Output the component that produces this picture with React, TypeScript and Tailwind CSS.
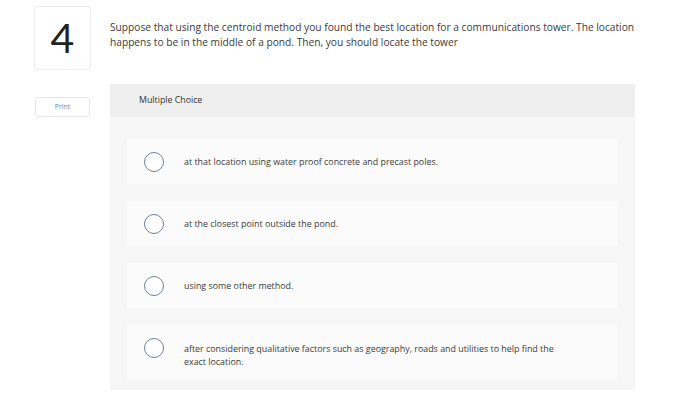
import React from 'react';

const options: React.ReactNode[] = [
  'at that location using water proof concrete and precast poles.',
  'at the closest point outside the pond.',
  'using some other method.',
  <>
    after considering qualitative factors such as geography, roads and utilities to help find the
    <br />
    exact location.
  </>,
];

const Radio = () => (
  <div className="w-[20px] h-[20px] shrink-0 rounded-full border-[1.5px] border-[#6d8198] bg-white" />
);

export default function App() {
  return (
    <div
      className="w-[700px] h-[404px] bg-white flex overflow-hidden"
      style={{ fontFamily: '"Open Sans", Lato, sans-serif' }}
    >
      {/* left column */}
      <div className="pl-[34px] pt-[6px] flex flex-col items-start">
        <div className="w-[57px] h-[64px] border border-[#ececec] rounded-[3px] flex items-center justify-center">
          <span className="text-[41px] font-normal leading-none text-[#222] mt-[-2px]" style={{ fontFamily: 'Lato, sans-serif' }}>4</span>
        </div>
        <div className="mt-[27px] ml-px w-[55px] h-[20px] border border-[#e6e6e6] rounded-[3px] flex items-center justify-center">
          <span className="text-[7px] text-[#6a8ab5]">Print</span>
        </div>
      </div>

      {/* right column */}
      <div className="ml-[19px] w-[525px] pt-[20px]">
        <p className="text-[10.2px] leading-[15px] text-[#3a3a3a] whitespace-nowrap">
          Suppose that using the centroid method you found the best location for a communications tower. The location
          <br />
          happens to be in the middle of a pond. Then, you should locate the tower
        </p>

        <div className="mt-[34px] bg-[#f6f6f6]">
          <div className="h-[33px] bg-[#efefef] pl-[29px] flex items-center">
            <span className="text-[8.8px] text-[#333]">Multiple Choice</span>
          </div>
          <div className="px-[17px] pt-[22px] pb-[11px] flex flex-col gap-[17px]">
            {options.map((o, i) => (
              <div
                key={i}
                className={`bg-[#fbfbfb] pl-[17px] pr-[20px] flex items-start ${i === 3 ? 'pt-[13px] pb-[11px]' : 'py-[12.5px]'}`}
              >
                <Radio />
                <span className="ml-[20px] mt-[3.5px] text-[8.9px] leading-[13px] text-[#3a3a3a] whitespace-nowrap">{o}</span>
              </div>
            ))}
          </div>
        </div>
      </div>
    </div>
  );
}
